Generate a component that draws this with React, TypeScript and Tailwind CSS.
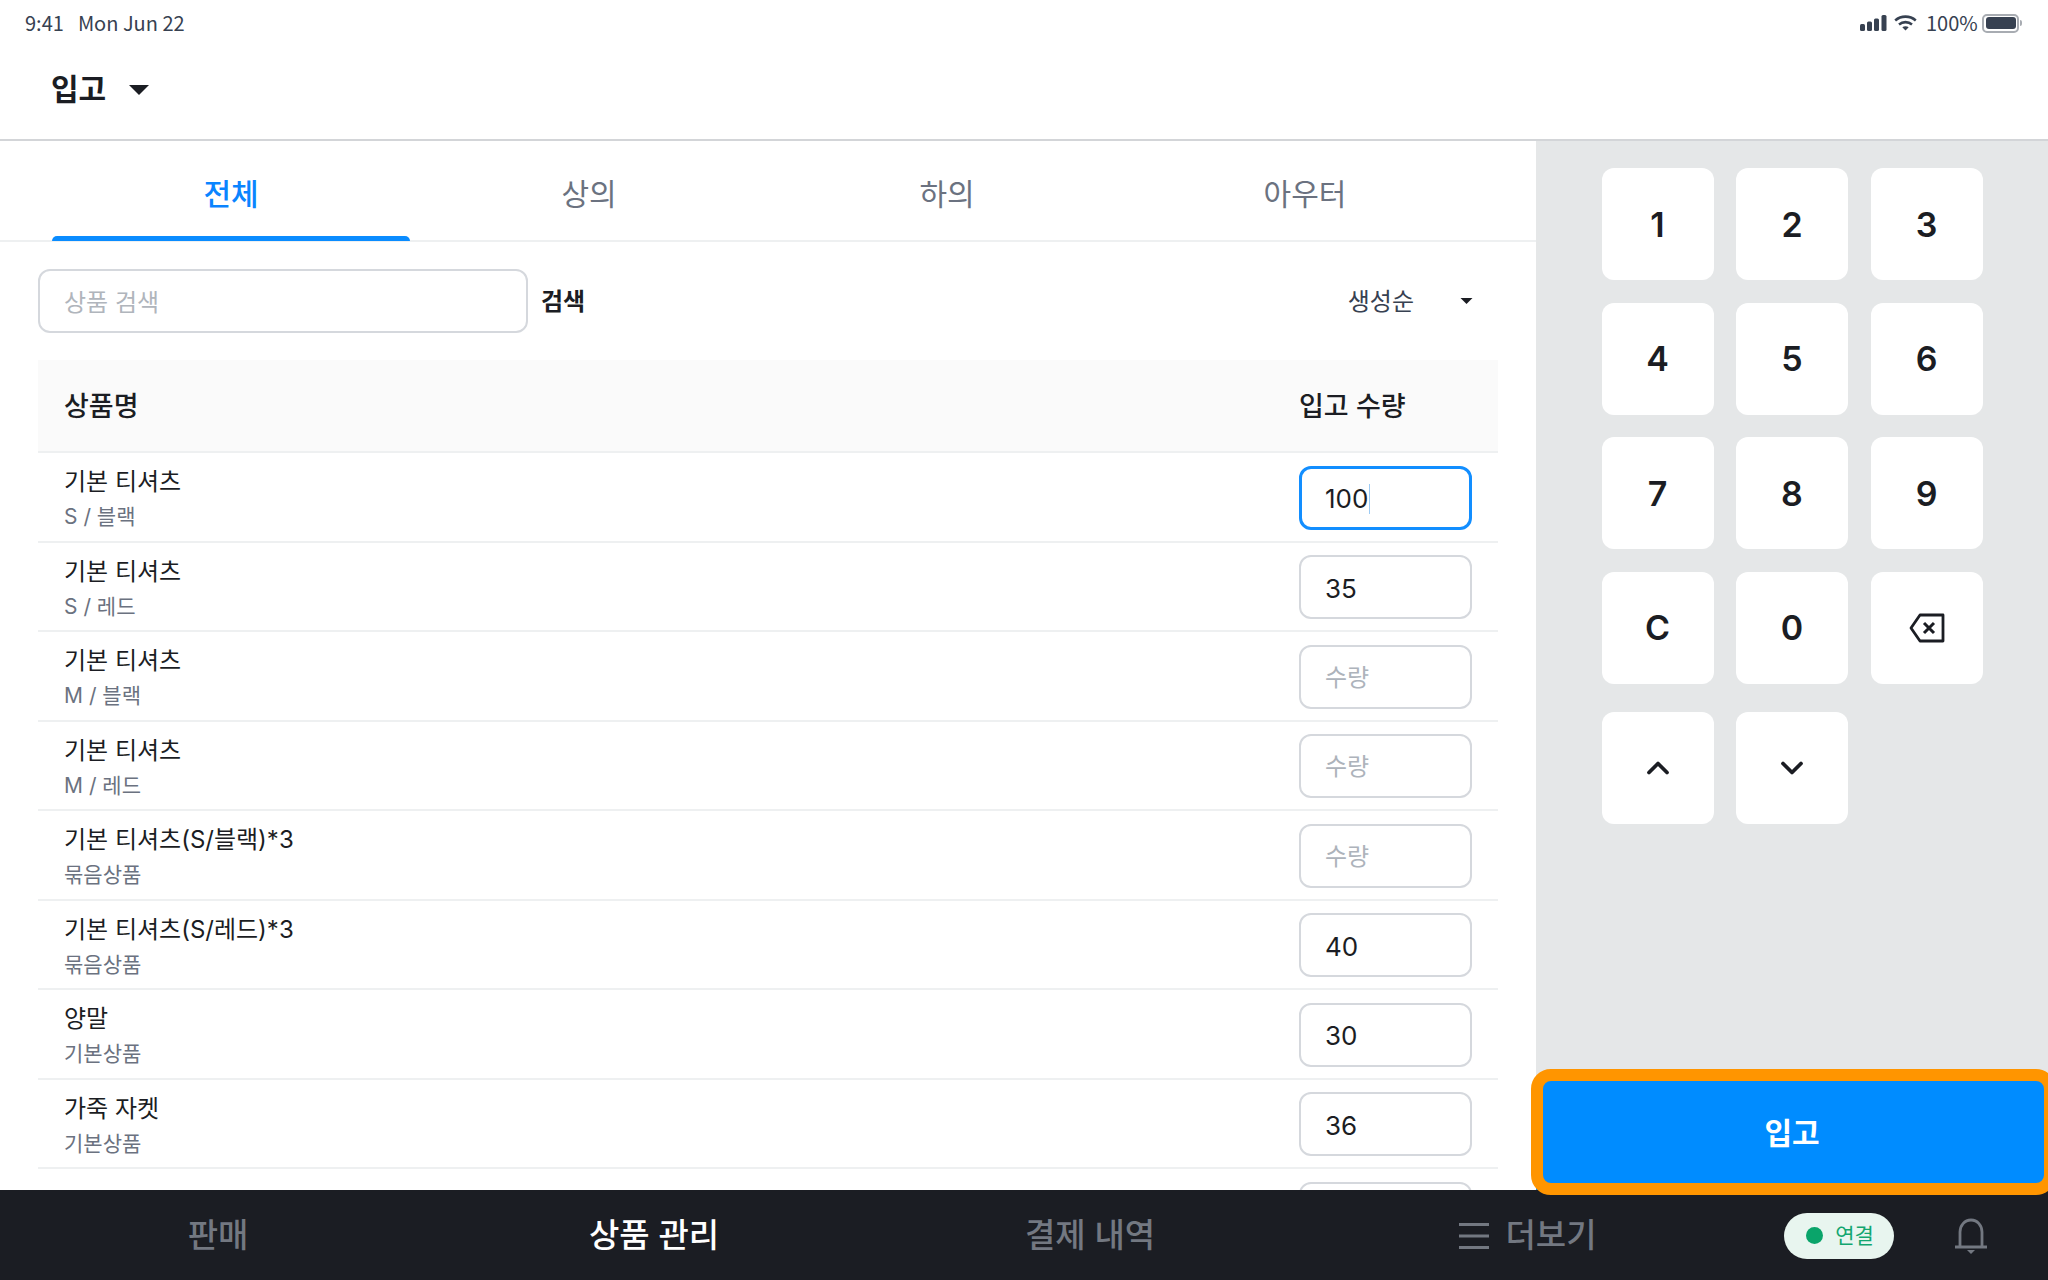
import { ChevronDown, ChevronUp } from "lucide-react";

const rows = [
  { name: "기본 티셔츠", sub: "S / 블랙", qty: "100", active: true },
  { name: "기본 티셔츠", sub: "S / 레드", qty: "35" },
  { name: "기본 티셔츠", sub: "M / 블랙", qty: "" },
  { name: "기본 티셔츠", sub: "M / 레드", qty: "" },
  { name: "기본 티셔츠(S/블랙)*3", sub: "묶음상품", qty: "" },
  { name: "기본 티셔츠(S/레드)*3", sub: "묶음상품", qty: "40" },
  { name: "양말", sub: "기본상품", qty: "30" },
  { name: "가죽 자켓", sub: "기본상품", qty: "36" },
  { name: "", sub: "", qty: "\u00a0" },
];

const tabs = ["전체", "상의", "하의", "아우터"];
const keys = ["1", "2", "3", "4", "5", "6", "7", "8", "9", "C", "0"];

function Caret({ className }: { className: string }) {
  return (
    <svg viewBox="0 0 20 10" className={className} fill="currentColor">
      <path d="M0 0h20L10 10z" />
    </svg>
  );
}

function StatusBar() {
  return (
    <div
      className="flex h-[46px] shrink-0 items-center justify-between pl-[25px] pr-[26px] text-[20px] text-[#374151]"
      style={{ fontFamily: '"Noto Sans CJK KR", sans-serif' }}
    >
      <div className="flex gap-[14px]">
        <span>9:41</span>
        <span>Mon Jun 22</span>
      </div>
      <div className="flex items-center">
        <svg width="27" height="16" viewBox="0 0 27 16" fill="currentColor">
          <rect x="0" y="9" width="5" height="7" rx="1.5" />
          <rect x="7" y="6.5" width="5" height="9.5" rx="1.5" />
          <rect x="14" y="3.5" width="5" height="12.5" rx="1.5" />
          <rect x="21.5" y="0" width="5" height="16" rx="1.5" />
        </svg>
        <svg className="ml-[7px]" width="23" height="16" viewBox="0 0 23 16" fill="none" stroke="currentColor" strokeWidth="2.6">
          <path d="M1.2 5.4c6-5 14.600-5 20.600 0" />
          <path d="M5 9.400c3.800-3 9.200-3 13 0" />
          <path d="M11.500 15.500 8.300 12.300c1.900-1.400 4.500-1.400 6.400 0z" fill="currentColor" stroke="none" />
        </svg>
        <span className="ml-[9px] w-[51px]">100%</span>
        <div className="ml-[5px] flex items-center">
          <div className="h-[19px] w-[37px] rounded-[5px] border-2 border-[#a8acb2] p-[1.5px]">
            <div className="h-full w-full rounded-[3px] bg-[#374151]" />
          </div>
          <div className="ml-[1px] h-[6px] w-[2px] rounded-r-sm bg-[#a8acb2]" />
        </div>
      </div>
    </div>
  );
}

function ProductRow({ name, sub, qty, active }: { name: string; sub: string; qty: string; active?: boolean }) {
  return (
    <div className="flex h-[89.500px] shrink-0 items-center justify-between border-b-2 border-[#eef0f1] pl-[26px] pr-[26px]">
      <div className="pt-[5px]">
        <div className="h-[35px] text-[24px] leading-[35px] text-[#1b1d23]">{name}</div>
        <div className="h-[35px] text-[21px] leading-[35px] text-[#6b7280]">{sub}</div>
      </div>
      <div
        className={
          active
            ? "mt-[2px] flex h-[64px] w-[173px] items-center rounded-[12px] border-[3px] border-[#128eff] pl-[23px] pt-[2px] text-[26px] text-[#1b1d23]"
            : "mt-[2px] flex h-[64px] w-[173px] items-center rounded-[12px] border-2 border-[#d5d8dd] pl-[24px] pt-[2px] text-[26px] text-[#1b1d23]"
        }
      >
        {qty ? <span>{qty}</span> : <span className="text-[24px] text-[#adb3bb]">수량</span>}
        {active && <span className="ml-[1px] h-[30px] w-[1px] bg-[#9ccbf5]" />}
      </div>
    </div>
  );
}

export default function App() {
  return (
    <div
      className="relative flex h-screen w-screen flex-col overflow-hidden bg-white"
      style={{ fontFamily: 'Inter, "Noto Sans CJK KR", sans-serif' }}
    >
      <StatusBar />

      {/* Title */}
      <div className="flex h-[95px] shrink-0 items-center border-b-2 border-[#d3d5d8] pb-[6px] pl-[51px]">
        <span className="text-[30px] font-bold text-[#1b1d23]">입고</span>
        <Caret className="ml-[23px] h-[10px] w-[20px] text-[#1b1d23]" />
      </div>

      <div className="flex min-h-0 flex-1">
        {/* Product list */}
        <div className="flex w-[1536px] shrink-0 flex-col overflow-hidden">
          <div className="flex h-[101px] shrink-0 border-b-2 border-[#eef0f1] px-[52px]">
            {tabs.map((tab, i) => (
              <div
                key={tab}
                className={
                  i === 0
                    ? "relative flex w-[358px] items-center justify-center pt-[7px] text-[30px] font-medium text-[#0a84ff]"
                    : "relative flex w-[358px] items-center justify-center pt-[7px] text-[30px] text-[#6b7280]"
                }
              >
                {tab}
                {i === 0 && <div className="absolute inset-x-0 bottom-[-1px] h-[5px] rounded-t-[5px] bg-[#0a8cff]" />}
              </div>
            ))}
          </div>

          <div className="flex min-h-0 flex-1 flex-col px-[38px]">
            {/* Search */}
            <div className="flex h-[118px] shrink-0 items-center">
              <div className="flex h-[64px] w-[490px] items-center rounded-[12px] border-2 border-[#d5d8dd] pl-[24px] pt-[4px] text-[24px] text-[#b0b5bc]">
                상품 검색
              </div>
              <span className="ml-[13px] pt-[2px] text-[24px] font-semibold text-[#1b1d23]">검색</span>
              <span className="ml-auto pt-[2px] text-[24px] text-[#374151]">생성순</span>
              <Caret className="ml-[46px] mr-[25px] h-[6px] w-[13px] text-[#1b1d23]" />
            </div>

            {/* Table header */}
            <div className="flex h-[93px] shrink-0 items-center justify-between border-b-2 border-[#eef0f1] bg-[#fafafa] pl-[26px] pr-[26px] pt-[3px] text-[27px] font-medium text-[#1b1d23]">
              <span>상품명</span>
              <span className="w-[173px]">입고 수량</span>
            </div>

            {rows.map((row, i) => (
              <ProductRow key={i} {...row} />
            ))}
          </div>
        </div>

        {/* Keypad */}
        <div className="flex flex-1 flex-col bg-[#e5e7e8]">
          <div className="pl-[65.500px] pt-[27px]">
            <div className="grid grid-cols-[repeat(3,112px)] gap-x-[22.500px] gap-y-[22.500px]">
              {keys.map((key) => (
                <div key={key} className="flex h-[112px] items-center justify-center rounded-[12px] bg-white text-[34px] font-semibold text-[#1b1d23]">
                  {key}
                </div>
              ))}
              <div className="flex h-[112px] items-center justify-center rounded-[12px] bg-white text-[#1b1d23]">
                <svg width="36" height="30" viewBox="0 0 36 30" fill="none" stroke="currentColor" strokeWidth="2.800">
                  <path d="M34 2v26H11L2 15 11 2z" strokeLinejoin="round" />
                  <path d="M15 10l10 10M25 10L15 20" strokeWidth="3" />
                </svg>
              </div>
              <div className="mt-[6px] flex h-[112px] items-center justify-center rounded-[12px] bg-white text-[#1b1d23]">
                <ChevronUp size={36} strokeWidth={2.500} />
              </div>
              <div className="mt-[6px] flex h-[112px] items-center justify-center rounded-[12px] bg-white text-[#1b1d23]">
                <ChevronDown size={36} strokeWidth={2.500} />
              </div>
            </div>
          </div>
          <div className="mt-auto flex h-[114px] items-center justify-center bg-[#008cff] text-[30px] font-semibold text-white">
            입고
          </div>
        </div>
      </div>

      {/* Bottom nav */}
      <div className="flex h-[90px] shrink-0 items-center bg-[#1b1d23] pt-[1px] text-[33px] font-medium text-[#737881]">
        <div className="flex w-[436px] justify-center">판매</div>
        <div className="flex w-[436px] justify-center text-white">상품 관리</div>
        <div className="flex w-[436px] justify-center">결제 내역</div>
        <div className="flex w-[436px] items-center justify-center gap-[16px] pl-[4px]">
          <svg width="30" height="26" viewBox="0 0 30 26" fill="currentColor">
            <rect x="0" y="0" width="30" height="3" />
            <rect x="0" y="11.500" width="30" height="3" />
            <rect x="0" y="23" width="30" height="3" />
          </svg>
          더보기
        </div>
        <div className="ml-[40px] flex h-[46px] w-[110px] items-center justify-center gap-[12px] rounded-full bg-[#e8f5ef] pl-[2px] text-[21px] font-normal text-[#12a66f]">
          <span className="h-[17px] w-[17px] rounded-full bg-[#0aa46a]" />
          연결
        </div>
        <svg className="ml-[60px] text-[#737881]" width="34" height="36" viewBox="0 0 34 36" fill="none" stroke="currentColor" strokeWidth="2.800">
          <path d="M6 28V14C6 7.500 10.500 2 17 2s11 5.500 11 12v14" />
          <path d="M1 29h32" strokeWidth="3" />
          <path d="M13 32h8l-4 4z" fill="currentColor" stroke="none" />
        </svg>
      </div>

      {/* Highlight around the confirm button */}
      <div className="pointer-events-none absolute left-[1531px] top-[1069px] h-[126px] w-[525px] rounded-[20px] border-[12px] border-[#ff9500]" />
    </div>
  );
}
